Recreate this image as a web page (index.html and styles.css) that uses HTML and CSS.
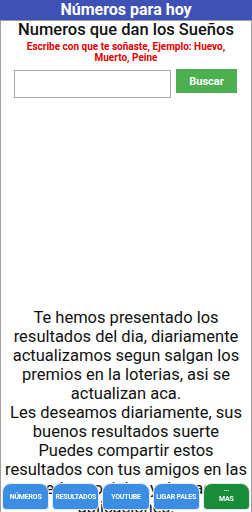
FILE: index.html
```html
<!DOCTYPE html>
<html lang="es">
<head>
  <meta charset="UTF-8" />
  <meta name="viewport" content="width=device-width, initial-scale=1.0"/>
  <title>Números para hoy</title>
  <link rel="stylesheet" href="styles.css">
</head>
<body>
  <header class="topbar">Números para hoy</header>

  <main class="page">
    <h1 class="titulo">Numeros que dan los Sueños</h1>
    <p class="ayuda">Escribe con que te soñaste, Ejemplo: Huevo, Muerto, Peine</p>

    <div class="buscador">
      <input type="text" class="campo">
      <button class="buscar">Buscar</button>
    </div>

    <p class="texto">
      Te hemos presentado los resultados del dia, diariamente actualizamos segun salgan los premios en la loterias, asi se actualizan aca.<br>
      Les deseamos diariamente, sus buenos resultados suerte<br>
      Puedes compartir estos resultados con tus amigos en las redes sociales y demas aplicaciones.
    </p>
  </main>

  <nav class="menu">
    <button class="tab">NÚMEROS</button>
    <button class="tab">RESULTADOS</button>
    <button class="tab">YOUTUBE</button>
    <button class="tab">LIGAR PALES</button>
    <button class="tab mas"><span class="puntos">...</span>MAS</button>
  </nav>
</body>
</html>
```

FILE: styles.css
```css
body {
  margin: 0;
  font-family: Roboto, "Liberation Sans", sans-serif;
  background: #fff;
  color: #111;
}
.topbar {
  background: #3f51b5;
  color: #fff;
  font-weight: bold;
  font-size: 16px;
  line-height: 20px;
  height: 20px;
  text-align: center;
}
.page {
  border: 1px solid #9e9e9e;
  border-bottom: none;
  min-height: 490px;
  box-sizing: border-box;
  text-align: center;
  overflow: hidden;
}
.titulo {
  font-size: 16.5px;
  font-weight: 500;
  line-height: 18px;
  margin: 0;
}
.ayuda {
  color: #e00000;
  font-size: 10px;
  font-weight: bold;
  line-height: 11px;
  margin: 2px 14px 0;
}
.buscador {
  display: flex;
  gap: 5px;
  margin: 6px 14px 0 13px;
  align-items: flex-start;
}
.campo {
  width: 157px;
  height: 28px;
  box-sizing: border-box;
  border: 1px solid #a8a8a8;
  margin: 1px 0 0;
  padding: 0;
}
.buscar {
  width: 61px;
  height: 24px;
  background: #4caf50;
  color: #fff;
  border: none;
  font-family: inherit;
  font-weight: bold;
  font-size: 11px;
  padding: 0;
}
.texto {
  font-size: 16.5px;
  line-height: 19px;
  margin: 210px 3px 0;
}
.menu {
  position: fixed;
  left: 0;
  right: 0;
  bottom: 2px;
  display: flex;
  gap: 3px;
  padding: 0 2px;
}
.tab {
  flex: 1;
  height: 27px;
  background: #3b8ee4;
  color: #fff;
  border: 1px solid #e8e8e8;
  border-radius: 9px 9px 4px 4px;
  font-family: inherit;
  font-weight: bold;
  font-size: 7px;
  letter-spacing: -0.2px;
  padding: 0;
  display: flex;
  flex-direction: column;
  align-items: center;
  justify-content: center;
}
.mas {
  background: #188c39;
}
.puntos {
  line-height: 6px;
  margin-top: -4px;
  margin-bottom: 3px;
}
```
